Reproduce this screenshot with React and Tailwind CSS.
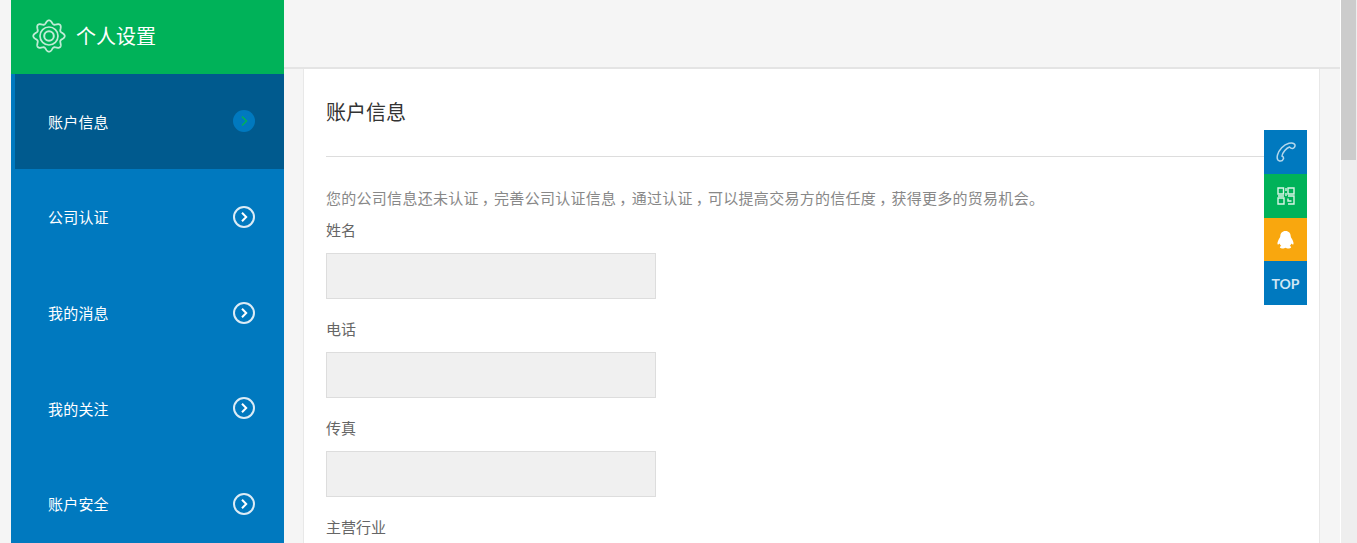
const FONT = "font-['Noto_Sans_CJK_SC','Noto_Sans',sans-serif]";

function Gear() {
  const teeth = 8;
  const cx = 17, cy = 17;
  const pts = [];
  for (let i = 0; i <= 320; i++) {
    const a = (i / 320) * Math.PI * 2 - Math.PI / 2;
    const r = 14 + 1.7 * Math.cos(teeth * (a + Math.PI / 2));
    pts.push(`${(cx + r * Math.cos(a)).toFixed(2)} ${(cy + r * Math.sin(a)).toFixed(2)}`);
  }
  const d = "M" + pts.join(" L") + "Z";
  return (
    <svg width="34" height="34" viewBox="0 0 34 34" fill="none" stroke="#ffffff" strokeOpacity="0.75" strokeWidth="1.8">
      <path d={d} />
      <circle cx="17" cy="17" r="9" strokeWidth="1.7" />
      <circle cx="17" cy="17" r="4.8" strokeWidth="2" />
    </svg>
  );
}

function Chevron({ active }) {
  return active ? (
    <span className="mb-px flex h-[22px] w-[22px] items-center justify-center rounded-full bg-[#0079bf]">
      <svg width="22" height="22" viewBox="0 0 22 22" fill="none" stroke="#00b259" strokeWidth="1.5">
        <path d="M9 6.5 L13.5 11 L9 15.5" />
      </svg>
    </span>
  ) : (
    <span className="mb-px flex h-[22px] w-[22px] items-center justify-center rounded-full border-2 border-[#dcecf6]">
      <svg width="18" height="18" viewBox="0 0 18 18" fill="none" stroke="#ffffff" strokeWidth="2">
        <path d="M7 4.8 L11.2 9 L7 13.2" />
      </svg>
    </span>
  );
}

const items = [
  { t: "账户信息", active: true, h: "h-[95px]" },
  { t: "公司认证", h: "h-[96px]" },
  { t: "我的消息", h: "h-[96px]" },
  { t: "我的关注", h: "h-[95px]" },
  { t: "账户安全", h: "h-[96px]" },
];

function Field({ label }) {
  return (
    <div className="mb-[19px]">
      <div className="mb-[13px] h-[21px] text-[15px] leading-[21px] text-[#666666]">{label}</div>
      <div className="h-[46px] w-[330px] border border-[#dddddd] bg-[#f0f0f0]" />
    </div>
  );
}

function Comma() {
  return <span className="ml-[3px] tracking-[-2.72px]">，</span>;
}

function Widget() {
  return (
    <div className="absolute left-[1264px] top-[130px] flex w-[43px] flex-col">
      <div className="flex h-[44px] items-center justify-center bg-[#0079bf]">
        <svg width="20" height="20" viewBox="0 0 20 20" fill="none" stroke="#ffffff" strokeOpacity="0.7" strokeWidth="1.5">
          <path d="M3.5 19 C1.5 18.5 0.8 16 1.5 13 C2.8 8 7.5 2.5 13 1.2 C15.5 0.7 18.5 1.2 19 3 C19.2 4.5 18 6.3 16.5 6.5 C15 6.7 14.2 5.8 13.5 5 C10.5 6 6.5 10.5 6 14 C7 14.5 7.8 15.8 7.3 17 C6.8 18.4 5 19.3 3.5 19 Z" />
        </svg>
      </div>
      <div className="flex h-[44px] items-center justify-center bg-[#00b259]">
        <svg width="18" height="18" viewBox="0 0 18 18" fill="none" stroke="#ffffff" strokeOpacity="0.85" strokeWidth="1.4">
          <path d="M1 1 H6.5 V7 H1 Z" />
          <path d="M11 1 H17 V7 H11 Z" />
          <path d="M1 11 H7 V17 H1 Z" />
          <path d="M9 1 V4 M9 6 V9 M1 9 H7 M11 9 H17 V17 H11 M11 11.5 V14 H14.5" />
        </svg>
      </div>
      <div className="flex h-[43px] items-center justify-center bg-[#f9a70e]">
        <svg width="17" height="18" viewBox="0 0 17 18" fill="#ffffff">
          <path d="M8.5 0 C5 0 3.5 2.4 3.3 5 C3.2 6.3 2.5 7 1.7 8.6 C0.7 10.6 0.1 12.6 0.7 13.4 C1.2 13.8 2 13.2 2.6 12.4 C3 13.6 3.6 14.5 4.3 15 C3.1 15.4 2.5 16 3.1 16.8 C4.1 17.9 7.4 17.7 8.5 16.8 C9.6 17.7 12.9 17.9 13.9 16.8 C14.5 16 13.9 15.4 12.7 15 C13.4 14.5 14 13.6 14.4 12.4 C15 13.2 15.8 13.8 16.3 13.4 C16.9 12.6 16.3 10.6 15.3 8.6 C14.5 7 13.8 6.3 13.7 5 C13.5 2.4 12 0 8.5 0 Z" />
        </svg>
      </div>
      <div className="flex h-[44px] items-center justify-center bg-[#0079bf] font-['Lato',sans-serif] text-[14px] font-bold text-[#cfe6f4]">
        TOP
      </div>
    </div>
  );
}

export default function App() {
  return (
    <div className={`relative flex h-[543px] w-[1357px] overflow-hidden bg-[#f5f5f5] ${FONT}`}>
      <div className="flex min-w-0 flex-1 pl-[11px]">
        <aside className="w-[273px] shrink-0 bg-[#0079bf]">
          <div className="flex h-[74px] items-center bg-[#00b259] pb-[2px] pl-[21px]">
            <span className="mb-[1px]"><Gear /></span>
            <span className="ml-[10px] text-[20px] leading-[28px] text-white">个人设置</span>
          </div>
          {items.map((it) => (
            <div
              key={it.t}
              className={`flex ${it.h} items-center justify-between pr-[29px] ${
                it.active ? "border-l-4 border-[#0079bf] bg-[#005a8e] pl-[33px]" : "pl-[37px]"
              }`}
            >
              <span className="text-[15px] leading-[20px] tracking-[0.2px] text-white">{it.t}</span>
              <Chevron active={it.active} />
            </div>
          ))}
        </aside>
        <div className="flex min-w-0 flex-1 flex-col pt-[67px]">
          <div className="flex-1 border-t-2 border-[#e4e4e4] pl-[19px] pr-[20px]">
            <div className="h-full border-x border-[#e8e8e8] bg-white px-[22px]">
              <h1 className="flex h-[88px] items-center border-b border-[#dddddd] pb-[1px] text-[20px] font-normal leading-[28px] text-[#333333]">
                账户信息
              </h1>
              <p className="mt-[30px] h-[22px] whitespace-nowrap text-[15px] leading-[22px] tracking-[0.28px] text-[#888888]">
                您的公司信息还未认证<Comma />完善公司认证信息<Comma />通过认证<Comma />可以提高交易方的信任度<Comma />获得更多的贸易机会。
              </p>
              <div className="mt-[10px]">
                <Field label="姓名" />
                <Field label="电话" />
                <Field label="传真" />
                <Field label="主营行业" />
              </div>
            </div>
          </div>
        </div>
      </div>
      <div className="h-full w-[17px] shrink-0 border-l border-white bg-[#eeeeee] pr-px">
        <div className="h-[160px] bg-[#cccccc]" />
      </div>
      <Widget />
    </div>
  );
}
